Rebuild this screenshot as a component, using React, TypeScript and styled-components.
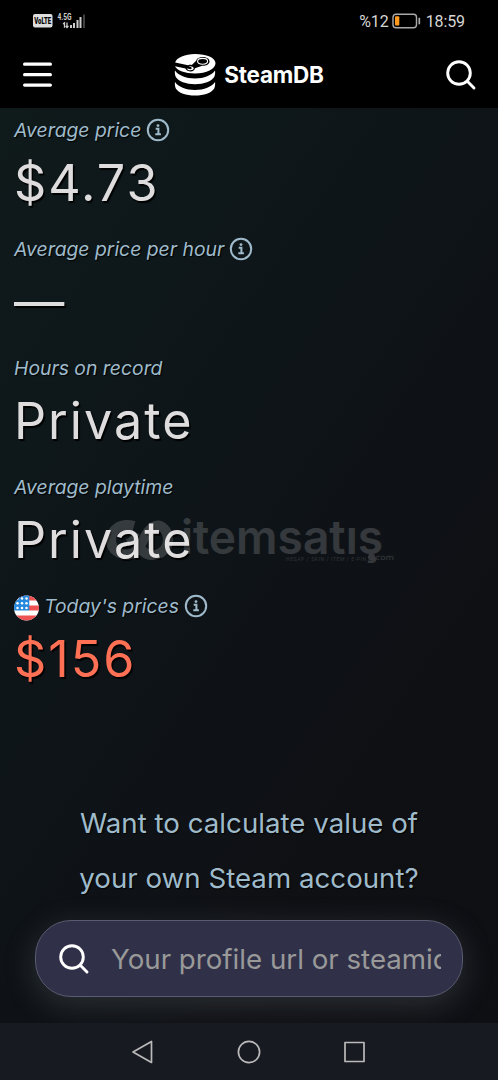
import React from "react";
import styled, { createGlobalStyle } from "styled-components";

const GlobalStyle = createGlobalStyle`
  * { box-sizing: border-box; }
  body { margin: 0; background: #0e1116; }
`;

const Screen = styled.div`
  position: relative;
  display: flex;
  flex-direction: column;
  width: 498px;
  height: 1080px;
  overflow: hidden;
  font-family: Inter, sans-serif;
  background: linear-gradient(125deg, #101b1b 0%, #0e171a 28%, #0e1317 52%, #0f1014 74%, #0e0f13 100%);
`;

const StatusBar = styled.div`
  display: flex;
  justify-content: space-between;
  align-items: center;
  height: 42px;
  padding: 0 33px 0 32px;
  background: #000;
  color: #d6d6d6;
`;

const StatusGroup = styled.div`
  display: flex;
  align-items: center;
`;

const StatusText = styled.span`
  padding-top: 2px;
  font: 400 16px/20px Roboto, sans-serif;
  letter-spacing: -0.1px;
`;

const Header = styled.header`
  display: flex;
  justify-content: space-between;
  align-items: center;
  height: 66px;
  padding: 0 21px 0 22px;
  background: #000;
  color: #fff;
`;

const Brand = styled.div`
  display: flex;
  align-items: center;
  gap: 8px;
  font-size: 22.5px;
  font-weight: 700;
  letter-spacing: -0.25px;
`;

const BrandName = styled.span`
  padding-bottom: 2px;
`;

const Content = styled.main`
  display: flex;
  flex-direction: column;
  flex: 1;
  overflow: hidden;
`;

const Stats = styled.section`
  display: flex;
  flex-direction: column;
  gap: 15px;
  padding-left: 14px;
`;

const Stat = styled.div`
  display: flex;
  flex-direction: column;
`;

const Label = styled.div`
  display: flex;
  align-items: center;
  gap: 5px;
  height: 44px;
  font-size: 19.35px;
  font-style: italic;
  color: #9fbbcb;
  text-shadow: 1px 1px 1px #000;
`;

const Value = styled.div<{ $accent?: boolean }>`
  height: 60px;
  font-size: 50.3px;
  line-height: 62px;
  letter-spacing: 2px;
  color: ${(p) => (p.$accent ? "#ff7055" : "#dedcdd")};
  text-shadow: 1.5px 1.5px 1px #000;
`;

const Prompt = styled.p`
  margin: 108px 0 0;
  font-size: 27.7px;
  line-height: 55px;
  text-align: center;
  color: #9fbbcb;
  text-shadow: 1px 1px 1px #000;
`;

const SearchBox = styled.div`
  display: flex;
  align-items: center;
  flex: none;
  height: 77px;
  margin: 14px 35px 0;
  padding: 0 21px 0 22px;
  border: 1px solid #5a5a70;
  border-radius: 36px;
  background: #303148;
  box-shadow: 0 8px 32px rgba(140, 150, 160, 0.24);
`;

const SearchText = styled.div`
  flex: 1;
  margin-left: 21px;
  overflow: hidden;
  white-space: nowrap;
  font-size: 27.7px;
  line-height: 40px;
  color: #999;
`;

const NavBar = styled.nav`
  display: flex;
  justify-content: center;
  align-items: center;
  gap: 82px;
  height: 57px;
  background: #181a21;
`;

const Watermark = styled.svg`
  position: absolute;
  left: 100px;
  top: 505px;
  opacity: 0.16;
`;

const InfoIcon = () => (
  <svg width="24" height="24" viewBox="0 0 24 24" fill="none" stroke="#9fbbcb" strokeWidth="2">
    <circle cx="12" cy="12" r="10.2" />
    <path d="M9.7 10.7h2.7v5.2M9.3 16.3h5.6" />
    <circle cx="12" cy="7.6" r="1.4" fill="#9fbbcb" stroke="none" />
  </svg>
);

const SearchIcon = () => (
  <svg width="32" height="32" viewBox="0 0 32 32" fill="none" stroke="#fff" strokeWidth="2.9" strokeLinecap="round">
    <circle cx="14" cy="14" r="11.300" />
    <path d="m22.300 22.300 6.700 6.700" />
  </svg>
);

const MenuIcon = () => (
  <svg width="31" height="26" viewBox="0 0 31 26" stroke="#fff" strokeWidth="3.2" strokeLinecap="round">
    <path d="M2.600 2.200h25.800M2.600 12.700h25.800M2.600 23.100h25.800" />
  </svg>
);

const DatabaseLogo = () => (
  <svg width="42" height="42" viewBox="0 0 42 42" fill="#fff">
    <path d="M1 28c-.4 2 0 4.500.8 6.500C4.500 39 12 41.600 21 41.600S37.500 39 40.200 34.500c.9-2 1.200-4.500.8-6.500-3 4.600-11 8-20 8S4 32.600 1 28Z" />
    <path d="M1 16.500c-.4 2 0 4.500.8 6.500C4.500 27.500 12 30.200 21 30.200S37.500 27.500 40.200 23c.9-2 1.200-4.500.8-6.500-3 4.600-11 8-20 8s-17-3.400-20-8Z" />
    <path d="M21 0C11 0 2.600 3.600 1.100 8.500l13 2.800c1.200-.5 2.500-.6 3.700-.4l4.400-4.200C22.700 4.200 25.500 3 28.500 3c4 0 7 1.800 7 4.400 0 2.700-3.200 4.500-7.300 4.400l-7.200 2.500c-.3 2.200-2.300 3.300-4.800 3.100-2.500-.1-4.200-1.200-4.700-2.800L1 12.300C3 16.700 11.200 19.500 21 19.500c11.500 0 20.500-4.500 20.500-10.200S32.500 0 21 0Z" />
    <ellipse cx="28.600" cy="7.300" rx="5" ry="2.900" fill="none" stroke="#fff" strokeWidth="1.100" />
    <path d="m12.700 14.400 3.200.7c1.800.3 2.600-1.500.8-2.100l-2-.5c2.200-.5 5 .3 5 2.100 0 2.200-5.700 2.500-7-.2Z" />
  </svg>
);

const SignalIcons = () => (
  <svg width="54" height="18" viewBox="0 0 54 18">
    <rect x="1" y="2" width="19.500" height="13.500" rx="2" fill="#dedede" />
    <text x="2.200" y="12" fontFamily="Roboto" fontWeight="900" fontSize="8.200" textLength="17" lengthAdjust="spacingAndGlyphs">VoLTE</text>
    <text x="25.500" y="8" fill="#d0d0d0" fontFamily="Roboto" fontWeight="700" fontSize="8.500" textLength="14" lengthAdjust="spacingAndGlyphs">4.5G</text>
    <path d="m31 12 1.500-1.200v5M35 10.500v5m-1.300-1.500 1.300 1.500 1.500-1.500" fill="none" stroke="#ccc" strokeWidth="1.300" />
    <path d="M39 13v3M42 11v5M45.500 8v8M48.500 5v11" stroke="#ccc" strokeWidth="2" />
    <path d="M52 2.500V16" stroke="#464646" strokeWidth="1.800" />
  </svg>
);

const BatteryDrawing = styled.svg`
  margin: 0 5px 0 3px;
`;

const Battery = () => (
  <BatteryDrawing width="29" height="16" viewBox="0 0 29 16" fill="none">
    <rect x="1" y="1.200" width="23.500" height="13.500" rx="3" stroke="#aaa" strokeWidth="1.400" />
    <rect x="3" y="3.300" width="4.300" height="9.300" rx="1" fill="#ff9a1d" />
    <path d="M27.300 4.800v6.500" stroke="#aaa" strokeWidth="1.700" />
  </BatteryDrawing>
);

const FlagDrawing = styled.svg`
  margin-top: 3px;
`;

const Flag = () => (
  <FlagDrawing width="25" height="26" viewBox="0 0 25 26">
    <clipPath id="flagCircle"><circle cx="12.500" cy="13" r="12.500" /></clipPath>
    <g clipPath="url(#flagCircle)">
      <rect width="25" height="26" fill="#fff" />
      <path d="M0 3h25" stroke="#ef5252" strokeWidth="5" />
      <path d="M15 13h10M0 23h25" stroke="#ef5252" strokeWidth="5" />
      <rect width="15.300" height="15.500" fill="#2688dd" />
      <g fill="#fff">
        {[3.5, 8.3, 13].flatMap((y) => [3.5, 8, 12.5].map((x) => <circle key={`${x}-${y}`} cx={x} cy={y} r="1.250" />))}
      </g>
    </g>
  </FlagDrawing>
);

const rows = [
  { label: "Average price", value: "$4.73", info: true },
  { label: "Average price per hour", value: "—", info: true },
  { label: "Hours on record", value: "Private" },
  { label: "Average playtime", value: "Private" },
  { label: "Today's prices", value: "$156", info: true, flag: true },
];

export default function App() {
  return (
    <Screen>
      <GlobalStyle />
      <StatusBar>
        <StatusGroup><SignalIcons /></StatusGroup>
        <StatusGroup>
          <StatusText>%12</StatusText>
          <Battery />
          <StatusText>18:59</StatusText>
        </StatusGroup>
      </StatusBar>
      <Header>
        <MenuIcon />
        <Brand><DatabaseLogo /><BrandName>SteamDB</BrandName></Brand>
        <SearchIcon />
      </Header>
      <Content>
        <Stats>
          {rows.map((r) => (
            <Stat key={r.label}>
              <Label>
                {r.flag && <Flag />}
                {r.label}
                {r.info && <InfoIcon />}
              </Label>
              <Value $accent={r.flag}>{r.value}</Value>
            </Stat>
          ))}
        </Stats>
        <Prompt>Want to calculate value of<br />your own Steam account?</Prompt>
        <SearchBox>
          <SearchIcon />
          <SearchText>Your profile url or steamid</SearchText>
        </SearchBox>
      </Content>
      <NavBar>
        <svg width="24" height="26" viewBox="0 0 24 26" fill="none" stroke="#bababa" strokeWidth="1.700" strokeLinejoin="round"><path d="M20.500 2.500v21L2 13Z" /></svg>
        <svg width="24" height="24" viewBox="0 0 24 24" fill="none" stroke="#bababa" strokeWidth="1.700"><circle cx="12" cy="12" r="10.600" /></svg>
        <svg width="24" height="24" viewBox="0 0 24 24" fill="none" stroke="#bababa" strokeWidth="1.700" strokeLinejoin="round"><rect x="2" y="2.500" width="19" height="19" /></svg>
      </NavBar>
      <Watermark width="300" height="64" viewBox="0 0 300 64" fill="#fff">
        <g fill="none" stroke="#fff" strokeWidth="10">
          <path d="M34 21C20 17 11 25 11 35s9 16 20 14c11-2 12-23 24-28 7-2 13 5 13 13 0 10-7 16-16 16-5 0-9-3-12-7" />
          <path d="M27 37c3-1 7-4 10-9" strokeWidth="6" />
        </g>
        <text x="81" y="48.500" fontFamily="Inter" fontWeight="600" fontSize="47" textLength="202" lengthAdjust="spacingAndGlyphs">itemsatış</text>
        <text x="186" y="55.500" fontFamily="Roboto" fontSize="5" textLength="80" fillOpacity="0.8">HESAP / SKIN / ITEM / E-PIN</text>
        <circle cx="271.500" cy="52" r="3.500" />
        <text x="275.500" y="54.500" fontFamily="DejaVu Sans" fontSize="7.500" textLength="18.500" lengthAdjust="spacingAndGlyphs">com</text>
      </Watermark>
    </Screen>
  );
}
